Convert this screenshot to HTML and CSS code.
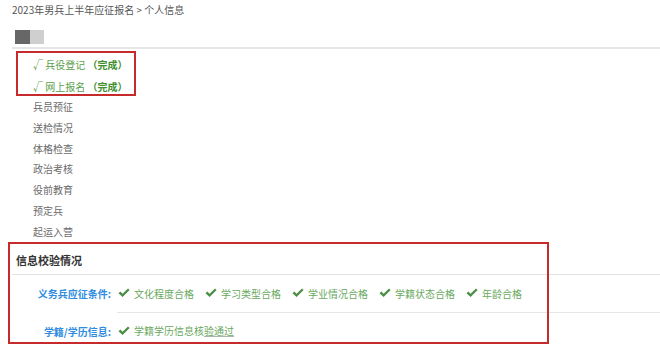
FILE: index.html
```html
<!DOCTYPE html>
<html lang="zh-CN">
<head>
    <meta charset="UTF-8">
    <title>个人信息</title>
    <link rel="stylesheet" href="styles.css">
</head>
<body>
    <div class="crumb">2023年男兵上半年应征报名 &gt; 个人信息</div>

    <div class="tabs">
        <span class="tab tab-dark"></span>
        <span class="tab tab-light"></span>
    </div>
    <div class="rule"></div>

    <ul class="steps">
        <li class="step done">√ 兵役登记 <b>（完成）</b></li>
        <li class="step done">√ 网上报名 <b>（完成）</b></li>
        <li class="step">兵员预征</li>
        <li class="step">送检情况</li>
        <li class="step">体格检查</li>
        <li class="step">政治考核</li>
        <li class="step">役前教育</li>
        <li class="step">预定兵</li>
        <li class="step">起运入营</li>
    </ul>

    <div class="check">
        <div class="check-title">信息校验情况</div>
        <div class="check-row">
            <div class="check-label">义务兵应征条件:</div>
            <div class="check-value">
                <span class="ok"><svg class="tick" viewBox="0 0 12 10"><path d="M0.5 5.2 L2.3 3.6 L4.6 5.8 L10 0.6 L11.6 2.1 L4.6 9 Z"/></svg>文化程度合格</span>
                <span class="ok"><svg class="tick" viewBox="0 0 12 10"><path d="M0.5 5.2 L2.3 3.6 L4.6 5.8 L10 0.6 L11.6 2.1 L4.6 9 Z"/></svg>学习类型合格</span>
                <span class="ok"><svg class="tick" viewBox="0 0 12 10"><path d="M0.5 5.2 L2.3 3.6 L4.6 5.8 L10 0.6 L11.6 2.1 L4.6 9 Z"/></svg>学业情况合格</span>
                <span class="ok"><svg class="tick" viewBox="0 0 12 10"><path d="M0.5 5.2 L2.3 3.6 L4.6 5.8 L10 0.6 L11.6 2.1 L4.6 9 Z"/></svg>学籍状态合格</span>
                <span class="ok"><svg class="tick" viewBox="0 0 12 10"><path d="M0.5 5.2 L2.3 3.6 L4.6 5.8 L10 0.6 L11.6 2.1 L4.6 9 Z"/></svg>年龄合格</span>
            </div>
        </div>
        <div class="check-row">
            <div class="check-label">学籍/学历信息:</div>
            <div class="check-value last">
                <span class="ok"><svg class="tick" viewBox="0 0 12 10"><path d="M0.5 5.2 L2.3 3.6 L4.6 5.8 L10 0.6 L11.6 2.1 L4.6 9 Z"/></svg>学籍学历信息核<u>验通过</u></span>
            </div>
        </div>
    </div>

    <!-- annotation boxes drawn over the page -->
    <div class="mark mark-steps"></div>
    <div class="mark mark-check"></div>
</body>
</html>
```

FILE: styles.css
```css
body {
    margin: 0;
    background: #fff;
    font-family: "Noto Sans CJK SC", "Liberation Sans", sans-serif;
    font-size: 10px;
    color: #666;
    position: relative;
    height: 349px;
    overflow: hidden;
}
.crumb {
    padding: 3px 0 0 12px;
    line-height: 14px;
    color: #555;
}
.tabs {
    display: flex;
    margin: 13px 0 0 15px;
}
.tab {
    width: 15px;
    height: 14px;
}
.tab-dark {
    background: #676767;
}
.tab-light {
    width: 14px;
    background: #cfcfcf;
}
.rule {
    margin: 3px 0 0 12px;
    height: 2px;
    background: #e6e6e6;
}
.steps {
    list-style: none;
    margin: 5px 0 0;
    padding: 0 0 0 33px;
}
.step {
    line-height: 20.8px;
    color: #6b6b6b;
}
.step.done {
    line-height: 21.5px;
    color: #5aa04a;
}
.step.done b {
    color: #3f8f2f;
}
.check {
    margin: 7px 0 0 12px;
}
.check-title {
    padding: 0 0 4px 4px;
    line-height: 20px;
    font-size: 11px;
    font-weight: bold;
    color: #333;
    border-bottom: 1px solid #e2e2e2;
}
.check-row {
    display: flex;
}
.check-label {
    width: 99px;
    padding-right: 6px;
    text-align: right;
    font-weight: bold;
    color: #2f8ce0;
    line-height: 37px;
}
.check-value {
    flex: 1;
    display: flex;
    align-items: center;
    border-bottom: 1px solid #e6e6e6;
    height: 37px;
}
.check-value.last {
    border-bottom: none;
    height: 36px;
}
.ok {
    display: flex;
    align-items: center;
    margin-right: 10px;
    color: #6aa85e;
}
.ok u {
    text-decoration-color: #a8b8a8;
}
.tick {
    width: 12px;
    height: 10px;
    margin: 0 4px 0 1px;
    fill: #4b8f45;
}
.mark {
    position: absolute;
    box-sizing: border-box;
    border: 2px solid #c62a2a;
}
.mark-steps {
    left: 16px;
    top: 51px;
    width: 120px;
    height: 45px;
}
.mark-check {
    left: 8px;
    top: 242px;
    width: 541px;
    height: 102px;
}
```
